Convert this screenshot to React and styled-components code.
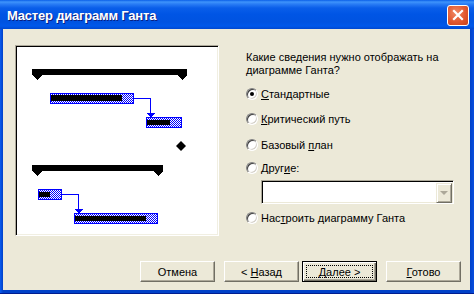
import React from 'react'
import styled, { createGlobalStyle } from 'styled-components'

const Global = createGlobalStyle`
  html, body {
    margin: 0;
    padding: 0;
    background: #ffffff;
  }
  body {
    font-family: "Liberation Sans", Arial, sans-serif;
    font-size: 11px;
    color: #000;
  }
`

const Window = styled.div`
  width: 474px;
  height: 294px;
  display: flex;
  flex-direction: column;
  background: #0831d9;
  box-sizing: border-box;
`

const TitleBar = styled.div`
  height: 29px;
  flex: none;
  display: flex;
  align-items: center;
  justify-content: space-between;
  padding: 0 5px 0 7px;
  box-sizing: border-box;
  background: linear-gradient(
    to bottom,
    #0a5fe8 0px,
    #3f94fb 2px,
    #2a7df5 4px,
    #0a5ee9 8px,
    #0055e5 14px,
    #0053e1 22px,
    #0058ea 26px,
    #0048d0 29px
  );
`

const Title = styled.span`
  color: #fff;
  font-family: "Liberation Sans", Arial, sans-serif;
  font-weight: bold;
  font-size: 13px;
  letter-spacing: -0.2px;
  text-shadow: 1px 1px 0 #0a1e80;
  padding-top: 1px;
`

const CloseButton = styled.div`
  width: 20px;
  height: 19px;
  border: 1px solid #fff;
  border-radius: 3px;
  background: radial-gradient(circle at 40% 35%, #f08a66 0%, #e2582f 55%, #c8421b 100%);
  display: flex;
  align-items: center;
  justify-content: center;
  margin-top: 1px;
`

const Frame = styled.div`
  flex: 1;
  display: flex;
  padding: 0 4px 4px 3px;
  background: linear-gradient(to right, #0a5cf0 0px, #0041c8 3px, #0041c8 470px, #0a4fe0 474px);
  box-shadow: inset 0 -1px 0 #001c90;
`

const Body = styled.div`
  flex: 1;
  background: #ece9d8;
  display: flex;
  flex-direction: column;
  padding: 16px 9px 8px 12px;
`

const Main = styled.div`
  display: flex;
  align-items: flex-start;
`

const PreviewBox = styled.div`
  width: 204px;
  height: 191px;
  box-sizing: border-box;
  background: #fff;
  border: 1px solid;
  border-color: #aca899 #fff #fff #aca899;
  box-shadow: inset 1px 1px 0 #000, inset -1px -1px 0 #f1efe2;
  padding: 1px;
  flex: none;
`

const Panel = styled.div`
  margin-left: 27px;
  padding-top: 6px;
  display: flex;
  flex-direction: column;
`

const Question = styled.div`
  line-height: 13px;
  width: 210px;
`

const Row = styled.label`
  display: flex;
  align-items: center;
  height: 13px;
  margin-top: ${p => p.$gap}px;
`

const Radio = styled.span`
  width: 12px;
  height: 12px;
  box-sizing: border-box;
  border-radius: 50%;
  background: #fff;
  border: 1px solid;
  border-color: #808080 #fff #fff #808080;
  box-shadow: inset 1px 1px 0 #404040, inset -1px -1px 0 #d4d0c8;
  margin-right: 3px;
  position: relative;
  flex: none;

  &::after {
    content: '';
    display: ${p => (p.$checked ? 'block' : 'none')};
    position: absolute;
    left: 3px;
    top: 3px;
    width: 4px;
    height: 4px;
    border-radius: 50%;
    background: #000;
  }
`

const Key = styled.span`
  text-decoration: underline;
`

const Combo = styled.div`
  margin: 6px 0 0 15px;
  width: 193px;
  height: 24px;
  box-sizing: border-box;
  background: #fff;
  border: 1px solid;
  border-color: #aca899 #fff #fff #aca899;
  box-shadow: inset 1px 1px 0 #000, inset -1px -1px 0 #ece9d8;
  display: flex;
  justify-content: flex-end;
  padding: 2px 1px 1px 2px;
`

const DropButton = styled.div`
  width: 16px;
  height: 20px;
  box-sizing: border-box;
  background: #ece9d8;
  border: 1px solid;
  border-color: #ece9d8 #716f64 #716f64 #ece9d8;
  box-shadow: inset 1px 1px 0 #fff, inset -1px -1px 0 #aca899;
  display: flex;
  align-items: center;
  justify-content: center;
`

const Arrow = styled.span`
  width: 0;
  height: 0;
  border-left: 4px solid transparent;
  border-right: 4px solid transparent;
  border-top: 4px solid #aca899;
`

const ButtonRow = styled.div`
  margin-top: auto;
  display: flex;
  justify-content: flex-end;
`

const Button = styled.div`
  width: 75px;
  height: 21px;
  box-sizing: border-box;
  margin-left: ${p => p.$gap || 0}px;
  background: #ece9d8;
  border: 1px solid;
  border-color: ${p => (p.$default ? '#000' : '#fff #716f64 #716f64 #fff')};
  box-shadow: ${p =>
    p.$default
      ? 'inset 1px 1px 0 #fff, inset -1px -1px 0 #716f64, inset -2px -2px 0 #aca899'
      : 'inset -1px -1px 0 #aca899'};
  display: flex;
  align-items: center;
  justify-content: center;
  padding: 3px;
`

const Focus = styled.span`
  flex: 1;
  align-self: stretch;
  display: flex;
  align-items: center;
  justify-content: center;
  outline: ${p => (p.$on ? '1px dotted #000' : 'none')};
  outline-offset: -1px;
`

function GanttPreview() {
  return (
    <svg width="200" height="187" viewBox="17 47 200 187" shapeRendering="crispEdges">
      <defs>
        <pattern id="hatch" width="2" height="2" patternUnits="userSpaceOnUse">
          <rect width="2" height="2" fill="#fff" />
          <rect width="1" height="1" fill="#0000ff" />
          <rect x="1" y="1" width="1" height="1" fill="#0000ff" />
        </pattern>
      </defs>

      <polygon points="32,69 187,69 187,75 182,80 177,75 42,75 37,80 32,75" fill="#000" />
      <rect x="50.5" y="93.5" width="83" height="10" fill="url(#hatch)" stroke="#0000ff" />
      <rect x="51" y="95" width="71" height="6" fill="#000" />
      <polyline points="134,98.5 150.5,98.5 150.5,114" fill="none" stroke="#0000ff" />
      <polygon points="147,113 155,113 150.5,117.5" fill="#0000ff" />
      <rect x="146.5" y="117.5" width="35" height="10" fill="url(#hatch)" stroke="#0000ff" />
      <rect x="147" y="120" width="23" height="5" fill="#000" />
      <polygon points="181,141 186,146 181,151 176,146" fill="#000" shapeRendering="auto" />

      <polygon points="32,165 163,165 163,171 158,176 153,171 42,171 37,176 32,171" fill="#000" />
      <rect x="38.5" y="189.5" width="23" height="10" fill="url(#hatch)" stroke="#0000ff" />
      <rect x="39" y="192" width="11" height="5" fill="#000" />
      <polyline points="62,194.5 78.5,194.5 78.5,210" fill="none" stroke="#0000ff" />
      <polygon points="75,209 83,209 78.5,213.5" fill="#0000ff" />
      <rect x="74.5" y="213.5" width="83" height="10" fill="url(#hatch)" stroke="#0000ff" />
      <rect x="75" y="216" width="71" height="5" fill="#000" />
    </svg>
  )
}

export default function App() {
  return (
    <>
      <Global />
      <Window>
        <TitleBar>
          <Title>Мастер диаграмм Ганта</Title>
          <CloseButton>
            <svg width="12" height="12" viewBox="0 0 12 12">
              <path d="M2 2 L10 10 M10 2 L2 10" stroke="#fff" strokeWidth="2.2" strokeLinecap="square" />
            </svg>
          </CloseButton>
        </TitleBar>
        <Frame>
          <Body>
            <Main>
              <PreviewBox>
                <GanttPreview />
              </PreviewBox>
              <Panel>
                <Question>
                  Какие сведения нужно отображать на<br />диаграмме Ганта?
                </Question>
                <Row $gap={10}>
                  <Radio $checked />
                  <span><Key>С</Key>тандартные</span>
                </Row>
                <Row $gap={12}>
                  <Radio />
                  <span><Key>К</Key>ритический путь</span>
                </Row>
                <Row $gap={13}>
                  <Radio />
                  <span>Базовый <Key>п</Key>лан</span>
                </Row>
                <Row $gap={10}>
                  <Radio />
                  <span>Друг<Key>и</Key>е:</span>
                </Row>
                <Combo>
                  <DropButton>
                    <Arrow />
                  </DropButton>
                </Combo>
                <Row $gap={7}>
                  <Radio />
                  <span>Нас<Key>т</Key>роить диаграмму Ганта</span>
                </Row>
              </Panel>
            </Main>
            <ButtonRow>
              <Button><Focus><span>Отмена</span></Focus></Button>
              <Button $gap={9}><Focus><span>&lt; <Key>Н</Key>азад</span></Focus></Button>
              <Button $gap={3} $default><Focus $on><span><Key>Д</Key>алее &gt;</span></Focus></Button>
              <Button $gap={9}><Focus><span><Key>Г</Key>отово</span></Focus></Button>
            </ButtonRow>
          </Body>
        </Frame>
      </Window>
    </>
  )
}
